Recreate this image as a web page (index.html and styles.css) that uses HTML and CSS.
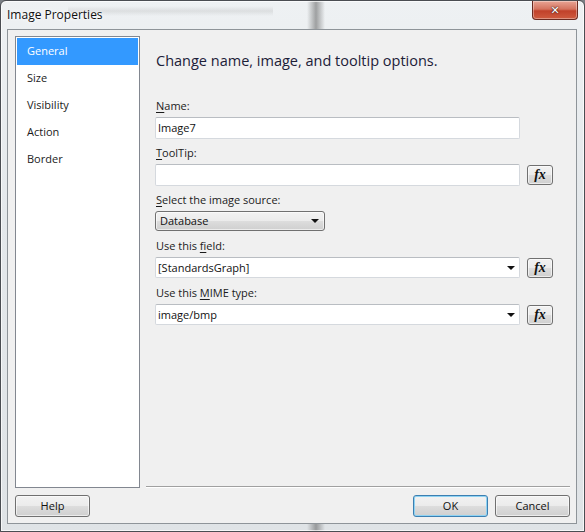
FILE: index.html
```html
<!DOCTYPE html>
<html>
<head>
<meta charset="utf-8">
<link rel="stylesheet" href="styles.css">
</head>
<body>
<div class="window">
  <div class="titlebar">
    <span class="title">Image Properties</span>
    <div class="close"><span class="x">&#x2715;</span></div>
  </div>
  <div class="client">
    <ul class="nav">
      <li class="sel">General</li>
      <li>Size</li>
      <li>Visibility</li>
      <li>Action</li>
      <li>Border</li>
    </ul>
    <div class="panel">
      <div class="heading">Change name, image, and tooltip options.</div>
      <div class="label"><u>N</u>ame:</div>
      <div class="row"><div class="input">Image7</div></div>
      <div class="label"><u>T</u>oolTip:</div>
      <div class="row"><div class="input"></div><div class="fx">fx</div></div>
      <div class="label"><u>S</u>elect the image source:</div>
      <div class="row short"><div class="combo">Database<span class="arrow"></span></div></div>
      <div class="label">Use this <u>f</u>ield:</div>
      <div class="row"><div class="input dd">[StandardsGraph]<span class="arrow"></span></div><div class="fx">fx</div></div>
      <div class="label">Use this <u>M</u>IME type:</div>
      <div class="row"><div class="input dd">image/bmp<span class="arrow"></span></div><div class="fx">fx</div></div>
    </div>
    <div class="footer">
      <div class="btn">Help</div>
      <div class="spacer"></div>
      <div class="btn def">OK</div>
      <div class="btn">Cancel</div>
    </div>
  </div>
</div>
</body>
</html>
```

FILE: styles.css
```css
html, body {
  margin: 0;
  padding: 0;
  width: 585px;
  height: 532px;
  overflow: hidden;
  background: #7a7f85;
}
.window {
  box-sizing: border-box;
  width: 585px;
  height: 532px;
  border: 1px solid #4a4d52;
  border-radius: 6px 6px 0 0;
  background:
    linear-gradient(180deg, rgba(0,0,0,0) 5px, rgba(140,140,140,0.18) 10px, rgba(0,0,0,0) 15px) 67px 0 / 205px 20px no-repeat,
    linear-gradient(90deg, rgba(0,0,0,0) 0, rgba(0,0,0,0) 306px, rgba(80,80,80,0.5) 315px, rgba(0,0,0,0) 324px, rgba(0,0,0,0) 100%),
    linear-gradient(180deg, #eef1f3 0%, #e4e8eb 40%, #dfe3e6 100%);
  display: flex;
  flex-direction: column;
  font-family: "Open Sans", "Noto Sans", sans-serif;
  font-size: 11px;
  color: #1b1b1b;
  box-shadow: inset 0 0 0 1px rgba(255,255,255,0.7);
}
.titlebar {
  height: 28px;
  display: flex;
  align-items: flex-start;
  flex: none;
}
.title {
  margin: 5px 0 0 6px;
  font-size: 12px;
  color: #101010;
  text-shadow: 0 0 6px #ffffff, 0 0 3px #ffffff;
}
.close {
  margin-left: auto;
  margin-right: 6px;
  width: 46px;
  height: 19px;
  box-sizing: border-box;
  border: 1px solid #6a2a20;
  border-top: none;
  border-radius: 0 0 4px 4px;
  background: linear-gradient(180deg, #e8a494 0%, #d4735f 45%, #c1412a 55%, #cf5b3f 100%);
  display: flex;
  align-items: center;
  justify-content: center;
  box-shadow: inset 0 0 0 1px rgba(255,255,255,0.35);
}
.close .x {
  color: #ffffff;
  font-family: "DejaVu Sans", sans-serif;
  font-weight: bold;
  font-size: 11px;
  line-height: 1;
  text-shadow: 0 0 2px #3a1a14, 0 0 1px #3a1a14;
}
.client {
  flex: 1;
  margin: 0 7px 7px 6px;
  border: 1px solid #8e9499;
  background: #f0f0f0;
  box-sizing: border-box;
  padding: 6px 6px 6px 7px;
  display: grid;
  grid-template-columns: 125px 1fr;
  grid-template-rows: auto auto;
  align-content: start;
  column-gap: 6px;
}
.nav {
  list-style: none;
  margin: 0;
  padding: 1px;
  background: #ffffff;
  border: 1px solid #828790;
  box-sizing: border-box;
  height: 452px;
}
.nav li {
  height: 27px;
  line-height: 26px;
  padding-left: 10px;
  color: #1b1b1b;
}
.nav li.sel {
  background: #3399ff;
  color: #ffffff;
}
.panel {
  border-bottom: 1px solid #a0a0a0;
  box-shadow: 0 1px 0 #ffffff;
  padding: 15px 0 0 9px;
  height: 451px;
  box-sizing: border-box;
}
.heading {
  font-size: 14.5px;
  color: #1c2038;
  margin-left: 1px;
  height: 45px;
}
.label {
  height: 19px;
  line-height: 19px;
  padding-left: 1px;
  margin-bottom: 2px;
}
.label u {
  text-decoration-thickness: 1px;
  text-underline-offset: 2px;
}
.row {
  display: flex;
  align-items: flex-start;
  gap: 7px;
  height: 22px;
  margin-bottom: 4px;
}
.row.short {
  height: 21px;
}
.input {
  box-sizing: border-box;
  width: 365px;
  height: 22px;
  border: 1px solid #d5d9de;
  border-top-color: #b9bdc2;
  border-radius: 2px;
  background: #ffffff;
  padding-left: 2px;
  line-height: 20px;
  color: #111;
  position: relative;
}
.input.dd {
  height: 21px;
  line-height: 19px;
}
.arrow {
  position: absolute;
  width: 0;
  height: 0;
  border-left: 4px solid transparent;
  border-right: 4px solid transparent;
  border-top: 4px solid #111;
}
.input.dd .arrow {
  right: 4px;
  top: 8px;
}
.combo {
  box-sizing: border-box;
  width: 170px;
  height: 20px;
  border: 1px solid #707070;
  border-radius: 3px;
  background: linear-gradient(180deg, #f2f2f2 0%, #ebebeb 50%, #dddddd 51%, #cfcfcf 100%);
  padding-left: 4px;
  line-height: 18px;
  color: #111;
  position: relative;
  box-shadow: inset 0 0 0 1px rgba(255,255,255,0.6);
}
.combo .arrow {
  right: 5px;
  top: 7px;
}
.fx {
  box-sizing: border-box;
  width: 26px;
  height: 20px;
  margin-top: 1px;
  border: 1px solid #707070;
  border-radius: 3px;
  background: linear-gradient(180deg, #f2f2f2 0%, #ebebeb 50%, #dddddd 51%, #cfcfcf 100%);
  box-shadow: inset 0 0 0 1px rgba(255,255,255,0.6);
  font-family: "Liberation Serif", serif;
  font-style: italic;
  font-weight: bold;
  font-size: 14px;
  line-height: 17px;
  text-align: center;
  color: #111;
}
.footer {
  grid-column: 1 / 3;
  display: flex;
  gap: 7px;
  margin-top: 7px;
}
.spacer {
  flex: 1;
}
.btn {
  box-sizing: border-box;
  width: 75px;
  height: 22px;
  border: 1px solid #707070;
  border-radius: 3px;
  background: linear-gradient(180deg, #f2f2f2 0%, #ebebeb 50%, #dddddd 51%, #cfcfcf 100%);
  box-shadow: inset 0 0 0 1px rgba(255,255,255,0.6);
  text-align: center;
  line-height: 20px;
  color: #111;
}
.btn.def {
  border-color: #3c7fb1;
  box-shadow: inset 0 0 0 1px #8fd3f3;
}
```
